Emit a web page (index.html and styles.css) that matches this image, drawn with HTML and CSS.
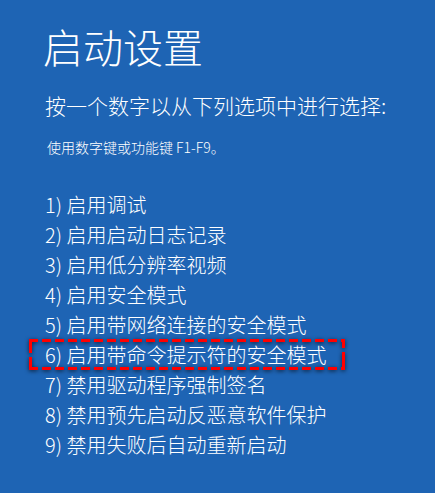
FILE: index.html
```html
<!DOCTYPE html>
<html lang="zh-CN">
<head>
<meta charset="utf-8">
<title>启动设置</title>
<link rel="stylesheet" href="styles.css">
</head>
<body>
<main class="screen">
  <h1 class="title">启动设置</h1>
  <p class="prompt">按一个数字以从下列选项中进行选择:</p>
  <p class="hint">使用数字键或功能键 F1-F9。</p>
  <ol class="options">
    <li>1) 启用调试</li>
    <li>2) 启用启动日志记录</li>
    <li>3) 启用低分辨率视频</li>
    <li>4) 启用安全模式</li>
    <li>5) 启用带网络连接的安全模式</li>
    <li class="highlight">6) 启用带命令提示符的安全模式</li>
    <li>7) 禁用驱动程序强制签名</li>
    <li>8) 禁用预先启动反恶意软件保护</li>
    <li>9) 禁用失败后自动重新启动</li>
  </ol>
</main>
</body>
</html>
```
FILE: styles.css
```css
html, body {
  margin: 0;
  padding: 0;
}
body {
  background: #1e64b4;
  color: #ffffff;
  font-family: "Noto Sans CJK SC", "Noto Sans", sans-serif;
  font-weight: 300;
  width: 435px;
  height: 493px;
  overflow: hidden;
}
.screen {
  padding: 26px 0 0 45px;
  display: flex;
  flex-direction: column;
}
.title {
  margin: 0;
  font-size: 40px;
  line-height: 40px;
  font-weight: 300;
  margin-left: -2px;
}
.prompt {
  margin: 24px 0 0 0;
  font-size: 21px;
  line-height: 30px;
}
.hint {
  margin: 17px 0 0 2px;
  font-size: 14px;
  line-height: 20px;
}
.options {
  list-style: none;
  margin: 33px 0 0 0;
  padding: 0;
  font-size: 20px;
  line-height: 30px;
}
.options li {
  white-space: nowrap;
}
.highlight {
  position: relative;
}
.highlight::before {
  content: "";
  position: absolute;
  left: -16px;
  top: -1px;
  width: 316px;
  height: 31px;
  background:
    repeating-linear-gradient(90deg, #ff0000 0 9px, transparent 9px 13px) left top / 100% 3px no-repeat,
    repeating-linear-gradient(90deg, #ff0000 0 9px, transparent 9px 13px) left bottom / 100% 3px no-repeat,
    linear-gradient(180deg, #ff0000 0 14px, transparent 14px 18px, #ff0000 18px) left top / 3px 100% no-repeat,
    linear-gradient(180deg, #ff0000 0 9px, transparent 9px 13px, #ff0000 13px) right top / 3px 100% no-repeat;
  filter: drop-shadow(0 1px 2px rgba(0, 0, 0, 0.7));
}
```
